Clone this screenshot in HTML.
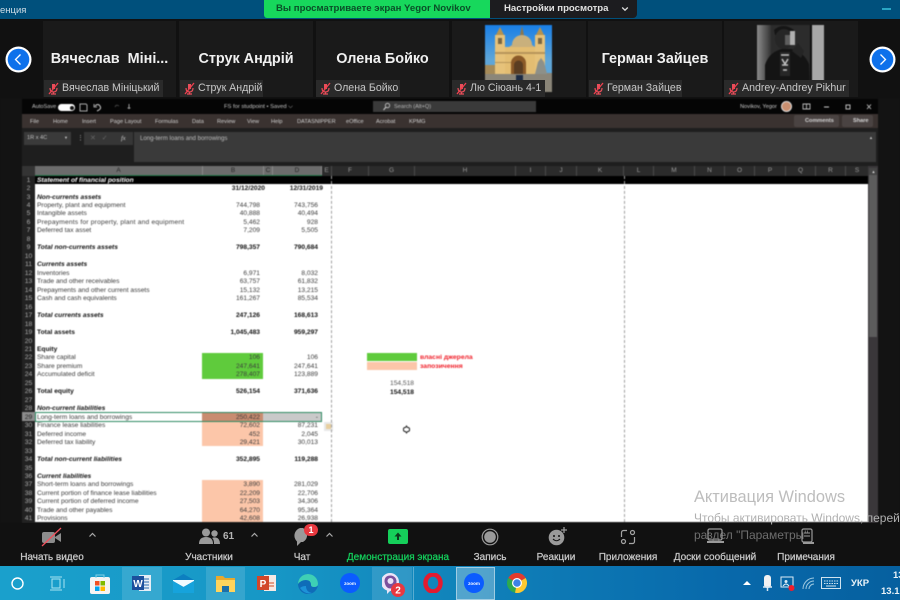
<!DOCTYPE html>
<html lang="ru"><head><meta charset="utf-8"><title>Zoom screen share</title>
<style>
*{box-sizing:border-box;margin:0;padding:0}
html,body{width:900px;height:600px;overflow:hidden;background:#111;font-family:"Liberation Sans",sans-serif}
.p{position:absolute;white-space:nowrap}
.blur{filter:blur(.42px)}
.tile{position:absolute;top:21px;height:76px;background:#1a1a1a}
.nm{position:absolute;left:0;right:0;top:29px;text-align:center;color:#f0f0f0;font-weight:bold;font-size:14.4px;line-height:18px;white-space:nowrap}
.lb{position:absolute;top:59px;height:17px;background:#2a2a2a;color:#c8c8c8;font-size:10.6px;line-height:17px;padding-left:18px;white-space:nowrap}
.lb svg{position:absolute;left:3px;top:2px}
.tab{position:absolute;top:118px;color:#cfcfcf;font-size:5.6px;line-height:8px;white-space:nowrap}
.ch{position:absolute;top:166px;height:10px;color:#9a9a9a;font-size:6.5px;line-height:10px;text-align:center;border-right:1px solid #4a4a4a}
.ch.s{background:#6c6c6c;color:#262626;border-right:1px solid #8a8a8a}
#sheet{position:absolute;left:22px;top:176.6px;width:846px}
.r{position:relative;height:8.47px;font-size:6.65px;line-height:8.47px;color:#3c3c3c;white-space:nowrap}
.r i{position:absolute;left:0;width:13px;text-align:center;font-style:normal;color:#ababab;font-size:6.8px}
.r a{position:absolute;left:15px}
.r b{position:absolute;right:608px;font-weight:normal}
.r u{position:absolute;right:550px;text-decoration:none}
.r.t{color:#111;font-weight:bold}
.r.t i{font-weight:normal}
.r.e a{font-style:italic}
.r.t b,.r.t u{font-weight:bold}
.tl{position:absolute;top:550.5px;color:#c8c8c8;font-size:10px;-webkit-text-stroke:.25px currentColor;line-height:13px;text-align:center;white-space:nowrap;transform:translateX(-50%)}
.ar{position:absolute;top:532px}
.sel{position:absolute;top:567px;height:33px;background:rgba(255,255,255,.13)}
.wm{position:absolute;white-space:nowrap}
</style></head>
<body>

<!-- top bar -->
<div class="p" style="left:0;top:0;width:900px;height:19px;background:#00507c"></div>
<div class="p" style="left:0;top:3px;color:#cfdde6;font-size:9.5px;line-height:15px">енция</div>
<div class="p" style="left:264px;top:0;width:226px;height:18px;background:#17d85c;border-radius:0 0 0 3px;font-size:9.6px;font-weight:bold;line-height:18px;padding-left:12px;color:#0a4f28">Вы просматриваете экран Yegor Novikov</div>
<div class="p" style="left:490px;top:0;width:147px;height:18px;background:#1c1c1f;border-radius:0 0 4px 0;color:#e2e2e2;font-size:9.6px;font-weight:bold;line-height:18px;padding-left:14px">Настройки просмотра</div>
<svg class="p" style="left:621px;top:6px" width="8" height="6" viewBox="0 0 8 6"><path d="M1.2 1.5 4 4.2 6.8 1.500" fill="none" stroke="#ddd" stroke-width="1.3"/></svg>
<div class="p" style="left:882px;top:8px;width:9px;height:2px;background:#2aa6c4"></div>

<!-- thumbnails -->
<div class="p" style="left:0;top:19px;width:900px;height:79px;background:#111"></div>
<div class="tile" style="left:43px;width:133px"><div class="nm">Вячеслав&nbsp; Міні...</div><div class="lb" style="left:1px;width:119px"><svg width="13" height="13" viewBox="0 0 13 13"><use href="#mic"/></svg>Вячеслав Мініцький</div></div>
<div class="tile" style="left:179px;width:134px"><div class="nm">Струк Андрій</div><div class="lb" style="left:1px;width:83px"><svg width="13" height="13" viewBox="0 0 13 13"><use href="#mic"/></svg>Струк Андрій</div></div>
<div class="tile" style="left:316px;width:133px"><div class="nm">Олена Бойко</div><div class="lb" style="left:0;width:84px"><svg width="13" height="13" viewBox="0 0 13 13"><use href="#mic"/></svg>Олена Бойко</div></div>
<div class="tile" style="left:452px;width:134px">
<svg style="position:absolute;left:33px;top:4px;filter:blur(.4px)" width="67" height="67" viewBox="0 0 67 67"><defs><linearGradient id="sky" x1="0" y1="0" x2="0" y2="1"><stop offset="0" stop-color="#1a7fe6"/><stop offset=".7" stop-color="#5fa6d8"/></linearGradient></defs><rect width="67" height="50" fill="url(#sky)"/><rect y="48" width="67" height="19" fill="#8b8679"/><path d="M0 40h10v9H0z" fill="#a58a58"/><path d="M20 22h30v27H20z" fill="#e3bd72"/><path d="M10 10h10v39H10zM50 10h10v39H50z" fill="#e6c27a"/><path d="M11 10l4-8 4 8zM51 10l4-8 4 8z" fill="#b5924f"/><path d="M13 13h4v6h-4zM53 13h4v6h-4z" fill="#7a6642"/><path d="M24 22l3-2a10 10 0 0 1 20 0l3 2z" fill="#c9b07c"/><path d="M35 10l2-9 2 9z" fill="#8a7750"/><path d="M10 27h50v2H10zM10 37h22v1H10z" fill="#b7955a"/><path d="M26 49V38a7.500 7.500 0 0 1 15 0v11z" fill="#8b5a28"/><path d="M29 49V40a4.500 4.500 0 0 1 9 0v9z" fill="#5a3d22"/><path d="M50 49l3-12 3-4 3 4 3 12z" fill="#8d9089"/><rect x="31" y="50" width="7" height="17" fill="#1c2b44"/></svg>
<div class="lb" style="left:0;width:93px"><svg width="13" height="13" viewBox="0 0 13 13"><use href="#mic"/></svg>Лю Сіюань 4-1</div></div>
<div class="tile" style="left:588px;width:134px"><div class="nm">Герман Зайцев</div><div class="lb" style="left:1px;width:93px"><svg width="13" height="13" viewBox="0 0 13 13"><use href="#mic"/></svg>Герман Зайцев</div></div>
<div class="tile" style="left:724px;width:134px">
<svg style="position:absolute;left:33px;top:4px;filter:blur(.5px)" width="67" height="67" viewBox="0 0 67 67"><defs><linearGradient id="lp" x1="0" y1="0" x2="1" y2="0"><stop offset="0" stop-color="#8c8c8c"/><stop offset="1" stop-color="#333"/></linearGradient></defs><rect width="67" height="67" fill="#2c2c2c"/><rect width="14" height="67" fill="url(#lp)"/><rect x="54" width="13" height="67" fill="#a8a8a8"/><rect x="53" width="2" height="67" fill="#111"/><path d="M17 5q9-8 20 0l-2 5H18z" fill="#151515"/><ellipse cx="27" cy="14" rx="9" ry="10" fill="#262626"/><path d="M28 10h7v10h-7z" fill="#5e5e5e"/><path d="M33 6h5v14h-5z" fill="#b0b0b0"/><path d="M8 67V40q4-13 17-16h9q13 3 18 15l1 28z" fill="#141414"/><path d="M23 27h10v24H23z" fill="#272727"/><path d="M24 30h8M25 34l3 5 3-5M25 40h6M26 45h4" stroke="#c2c2c2" stroke-width="1.500" fill="none"/><path d="M35 26l9 7 3-7-6-8z" fill="#252525"/></svg>
<div class="lb" style="left:0;width:125px"><svg width="13" height="13" viewBox="0 0 13 13"><use href="#mic"/></svg>Andrey-Andrey Pikhur</div></div>
<svg class="p" style="left:0;top:0;width:0;height:0"><defs><g id="mic"><path d="M5 2h3v5H5z" fill="#e94e5a"/><path d="M3 6q0 4 3.500 4T10 6M6.500 10v2M4 12h5" fill="none" stroke="#e94e5a" stroke-width="1.200"/><path d="M2 12 11 1" stroke="#f0404f" stroke-width="1.300"/></g></defs></svg>
<svg class="p" style="left:5px;top:46px" width="27" height="27" viewBox="0 0 27 27"><circle cx="13.500" cy="13.500" r="13" fill="#fff"/><circle cx="13.500" cy="13.500" r="10.800" fill="#0e71eb"/><path d="M15.500 8.500l-5 5 5 5" fill="none" stroke="#fff" stroke-width="1.300"/></svg>
<svg class="p" style="left:869px;top:46px" width="27" height="27" viewBox="0 0 27 27"><circle cx="13.500" cy="13.500" r="13" fill="#fff"/><circle cx="13.500" cy="13.500" r="10.800" fill="#0e71eb"/><path d="M11.500 8.500l5 5-5 5" fill="none" stroke="#fff" stroke-width="1.300"/></svg>

<!-- excel window -->
<div class="blur">
<div class="p" style="left:22px;top:99px;width:858px;height:424px;background:#1e1e1e"></div>
<div class="p" style="left:22px;top:99px;width:858px;height:15px;background:#050505"></div>
<div class="p" style="left:32px;top:103px;color:#c6c6c6;font-size:5.6px;line-height:8px">AutoSave</div>
<div class="p" style="left:58px;top:104px;width:17px;height:7px;border-radius:4px;background:#fff"></div>
<div class="p" style="left:70px;top:105.500px;width:4px;height:4px;border-radius:2px;background:#111"></div>
<svg class="p" style="left:79px;top:103px" width="56" height="9" viewBox="0 0 56 9"><path d="M1 1h6l1 1v6H1z" fill="none" stroke="#aaa"/><path d="M16 3q3-3 5 0t-3 5" fill="none" stroke="#ccc"/><path d="M15 1v3h3" fill="none" stroke="#ccc" stroke-width=".8"/><path d="M40 3q-3-2-4 1" fill="none" stroke="#444"/><path d="M50 1v5M48.500 5h3" stroke="#999"/></svg>
<div class="p" style="left:224px;top:103px;color:#c4c4c4;font-size:5.800px;line-height:8px">FS for studpoint • Saved ⌵</div>
<div class="p" style="left:373px;top:101px;width:163px;height:11px;background:#3a3a3a"></div>
<svg class="p" style="left:382px;top:102px" width="9" height="9" viewBox="0 0 9 9"><circle cx="5.500" cy="3.500" r="2.200" fill="none" stroke="#ccc" stroke-width=".8"/><path d="M4 5 1.500 8" stroke="#ccc"/></svg>
<div class="p" style="left:394px;top:103px;color:#b8b8b8;font-size:5.600px;line-height:8px">Search (Alt+Q)</div>
<div class="p" style="left:740px;top:103px;color:#c8c8c8;font-size:5.600px;line-height:8px">Novikov, Yegor</div>
<div class="p" style="left:781px;top:101px;width:11px;height:11px;border-radius:50%;background:#c98f70;border:1px solid #ddd"></div>
<svg class="p" style="left:800px;top:102px" width="74" height="10" viewBox="0 0 74 10"><path d="M3 2h7v5H3zM6.500 2v5" fill="none" stroke="#bbb" stroke-width=".9"/><path d="M24 5h5" stroke="#ccc"/><path d="M46 3h4v4h-4z" fill="none" stroke="#bbb"/><path d="M67 2.500l4 4.500M71 2.500l-4 4.500" stroke="#ccc" stroke-width=".8"/></svg>

<div class="p" style="left:22px;top:114px;width:858px;height:14px;background:#3a3230"></div>
<div class="tab" style="left:30px">File</div><div class="tab" style="left:53px">Home</div><div class="tab" style="left:82px">Insert</div><div class="tab" style="left:110px">Page Layout</div><div class="tab" style="left:155px">Formulas</div><div class="tab" style="left:192px">Data</div><div class="tab" style="left:217px">Review</div><div class="tab" style="left:247px">View</div><div class="tab" style="left:271px">Help</div><div class="tab" style="left:297px">DATASNIPPER</div><div class="tab" style="left:346px">eOffice</div><div class="tab" style="left:376px">Acrobat</div><div class="tab" style="left:409px">KPMG</div>
<div class="p" style="left:794px;top:115px;width:45px;height:12px;background:#4a4342;border-radius:2px;color:#d4d4d4;font-size:5.600px;line-height:12px;padding-left:11px;font-weight:bold">Comments</div>
<div class="p" style="left:842px;top:115px;width:31px;height:12px;background:#4a4342;border-radius:2px;color:#d4d4d4;font-size:5.600px;line-height:12px;padding-left:11px;font-weight:bold">Share</div>

<div class="p" style="left:24px;top:132px;width:47px;height:13px;background:#3a3a3a;color:#c2c2c2;font-size:5.600px;line-height:13px;padding-left:3px">1R x 4C</div>
<div class="p" style="left:64px;top:135px;color:#ccc;font-size:4px;line-height:6px">▼</div>
<div class="p" style="left:77px;top:134px;color:#aaa;font-size:7px;line-height:9px">⋮</div>
<div class="p" style="left:84px;top:132px;width:49px;height:13px;background:#363636"></div>
<div class="p" style="left:90px;top:134px;color:#666;font-size:7px;line-height:9px">✕&nbsp;&nbsp;&nbsp;✓</div>
<div class="p" style="left:121px;top:134px;color:#ccc;font-size:6.500px;line-height:9px;font-style:italic;font-family:'Liberation Serif',serif">fx</div>
<div class="p" style="left:134px;top:131.500px;width:742px;height:30.500px;background:#3a3a3a"></div>
<div class="p" style="left:140px;top:134px;color:#bdbdbd;font-size:6.100px;line-height:9px">Long-term loans and borrowings</div>
<div class="p" style="left:869px;top:135px;color:#ccc;font-size:4px;line-height:5px">▲</div>

<!-- column headers -->
<div class="p" style="left:22px;top:166px;width:846px;height:10px;background:#2b2b2b"></div>
<div class="p" style="left:22px;top:166px;width:13px;height:10px;background:#343434"></div>
<div class="ch s" style="left:35px;width:168px">A</div>
<div class="ch s" style="left:203px;width:61px">B</div>
<div class="ch s" style="left:264px;width:9px">C</div>
<div class="ch s" style="left:273px;width:49px">D</div>
<div class="ch" style="left:322px;width:10px">E</div>
<div class="ch" style="left:332px;width:37px">F</div>
<div class="ch" style="left:369px;width:46px">G</div>
<div class="ch" style="left:415px;width:101px">H</div>
<div class="ch" style="left:516px;width:30px">I</div>
<div class="ch" style="left:546px;width:31px">J</div>
<div class="ch" style="left:577px;width:47px">K</div>
<div class="ch" style="left:624px;width:30px">L</div>
<div class="ch" style="left:654px;width:41px">M</div>
<div class="ch" style="left:695px;width:30px">N</div>
<div class="ch" style="left:725px;width:30px">O</div>
<div class="ch" style="left:755px;width:31px">P</div>
<div class="ch" style="left:786px;width:30px">Q</div>
<div class="ch" style="left:816px;width:30px">R</div>
<div class="ch" style="left:846px;width:22px;border:0">S</div>
<div class="p" style="left:35px;top:175px;width:287px;height:1px;background:#217346"></div>

<!-- sheet bg -->
<div class="p" style="left:22px;top:176px;width:13px;height:347px;background:#222"></div>
<div class="p" style="left:35px;top:176px;width:833px;height:8px;background:#000"></div>
<div class="p" style="left:35px;top:184px;width:833px;height:338px;background:#fff"></div>
<div class="p" style="left:202px;top:352.500px;width:61px;height:26.200px;background:#5fcb3c"></div>
<div class="p" style="left:202px;top:412.400px;width:61px;height:8.500px;background:#c98c70"></div>
<div class="p" style="left:263px;top:412.400px;width:59px;height:8.500px;background:#c9c9c9"></div>
<div class="p" style="left:202px;top:420.900px;width:61px;height:25.400px;background:#fcc6a9"></div>
<div class="p" style="left:202px;top:480.100px;width:61px;height:42px;background:#fcc6a9"></div>
<div class="p" style="left:367px;top:352.800px;width:50px;height:8.600px;background:#5fcb3c"></div>
<div class="p" style="left:367px;top:361.500px;width:50px;height:8.500px;background:#fcc6a9"></div>
<div class="p" style="left:22px;top:412.400px;width:13px;height:8.500px;background:#8c8c8c"></div>

<div id="sheet">
<div class="r e" style="color:#fff;font-weight:bold"><i style="font-weight:normal">1</i><a>Statement of financial position</a></div>
<div class="r t"><i>2</i><b style="right:603px">31/12/2020</b><u style="right:545px">12/31/2019</u></div>
<div class="r t e"><i>3</i><a>Non-currents assets</a></div>
<div class="r"><i>4</i><a>Property, plant and equipment</a><b>744,798</b><u>743,756</u></div>
<div class="r"><i>5</i><a>Intangible assets</a><b>40,888</b><u>40,494</u></div>
<div class="r"><i>6</i><a style="letter-spacing:.2px">Prepayments for property, plant and equipment</a><b>5,462</b><u>928</u></div>
<div class="r"><i>7</i><a>Deferred tax asset</a><b>7,209</b><u>5,505</u></div>
<div class="r"><i>8</i></div>
<div class="r t e"><i>9</i><a>Total non-currents assets</a><b>798,357</b><u>790,684</u></div>
<div class="r"><i>10</i></div>
<div class="r t e"><i>11</i><a>Currents assets</a></div>
<div class="r"><i>12</i><a>Inventories</a><b>6,971</b><u>8,032</u></div>
<div class="r"><i>13</i><a>Trade and other receivables</a><b>63,757</b><u>61,832</u></div>
<div class="r"><i>14</i><a>Prepayments and other current assets</a><b>15,132</b><u>13,215</u></div>
<div class="r"><i>15</i><a>Cash and cash equivalents</a><b>161,267</b><u>85,534</u></div>
<div class="r"><i>16</i></div>
<div class="r t e"><i>17</i><a>Total currents assets</a><b>247,126</b><u>168,613</u></div>
<div class="r"><i>18</i></div>
<div class="r t"><i>19</i><a>Total assets</a><b>1,045,483</b><u>959,297</u></div>
<div class="r"><i>20</i></div>
<div class="r t"><i>21</i><a>Equity</a></div>
<div class="r"><i>22</i><a>Share capital</a><b>106</b><u>106</u></div>
<div class="r"><i>23</i><a>Share premium</a><b>247,641</b><u>247,641</u></div>
<div class="r"><i>24</i><a>Accumulated deficit</a><b>278,407</b><u>123,889</u></div>
<div class="r"><i>25</i></div>
<div class="r t"><i>26</i><a>Total equity</a><b>526,154</b><u>371,636</u></div>
<div class="r"><i>27</i></div>
<div class="r t e"><i>28</i><a>Non-current liabilities</a></div>
<div class="r"><i style="color:#222">29</i><a>Long-term loans and borrowings</a><b>250,422</b><u>-</u></div>
<div class="r"><i>30</i><a>Finance lease liabilities</a><b>72,602</b><u>87,231</u></div>
<div class="r"><i>31</i><a>Deferred income</a><b>452</b><u>2,045</u></div>
<div class="r"><i>32</i><a>Deferred tax liability</a><b>29,421</b><u>30,013</u></div>
<div class="r"><i>33</i></div>
<div class="r t e"><i>34</i><a>Total non-current liabilities</a><b>352,895</b><u>119,288</u></div>
<div class="r"><i>35</i></div>
<div class="r t e"><i>36</i><a>Current liabilities</a></div>
<div class="r"><i>37</i><a>Short-term loans and borrowings</a><b>3,890</b><u>281,029</u></div>
<div class="r"><i>38</i><a>Current portion of finance lease liabilities</a><b>22,209</b><u>22,706</u></div>
<div class="r"><i>39</i><a>Current portion of deferred income</a><b>27,503</b><u>34,306</u></div>
<div class="r"><i>40</i><a>Trade and other payables</a><b>64,270</b><u>95,364</u></div>
<div class="r"><i>41</i><a>Provisions</a><b>42,608</b><u>26,938</u></div>
</div>

<div class="p" style="left:35px;top:411.500px;width:287px;height:10px;border:1.200px solid #2e8a63"></div>
<div class="p" style="left:324px;top:422px;width:9px;height:9px;background:#e8e8e8"></div>
<div class="p" style="left:326px;top:424px;width:5px;height:5px;background:#e8cf9f"></div>
<div class="p" style="left:331px;top:176px;height:346px;border-left:1px dashed #a0a0a0"></div>
<div class="p" style="left:624px;top:176px;height:346px;border-left:1px dashed #a0a0a0"></div>
<div class="p" style="left:420px;top:354px;color:#f0202a;font-size:6.800px;font-weight:bold;line-height:8.500px">власні джерела</div>
<div class="p" style="left:420px;top:362.500px;color:#f0202a;font-size:6.800px;font-weight:bold;line-height:8.500px">запозичення</div>
<div class="p" style="left:390px;top:380px;color:#555;font-size:6.650px;line-height:8.500px">154,518</div>
<div class="p" style="left:390px;top:388.500px;color:#111;font-size:6.650px;font-weight:bold;line-height:8.500px">154,518</div>
<svg class="p" style="left:402px;top:425px" width="9" height="9" viewBox="0 0 9 9"><path d="M4.500 1l1 1.500h1l1 1v2l-1 1h-1l-1 1.500-1-1.500h-1l-1-1v-2l1-1h1z" fill="#fff" stroke="#222"/></svg>

<div class="p" style="left:868px;top:166px;width:10px;height:357px;background:#3a373a"></div>
<div class="p" style="left:869px;top:175px;width:8px;height:162px;background:#5c5c5c"></div>
<div class="p" style="left:869px;top:168px;width:8px;height:7px;background:#454545"></div>
<div class="p" style="left:871.500px;top:170px;color:#ddd;font-size:4px;line-height:4px">▲</div>
<div class="p" style="left:878px;top:98px;width:22px;height:425px;background:#131313"></div>
<div class="p" style="left:0;top:98px;width:22px;height:425px;background:#131313"></div>
</div>

<!-- watermark -->
<div class="wm" style="left:694px;top:487px;font-size:16.400px;line-height:20px;color:#bdbdbd">Активация Windows</div>

<!-- zoom toolbar -->
<div class="p" style="left:0;top:522.500px;width:900px;height:43.500px;background:#111"></div>
<div class="wm" style="left:694px;top:511px;font-size:12px;line-height:14px;color:#b0b0b0">Чтобы активировать Windows, перей</div>
<div class="wm" style="left:694px;top:527.500px;font-size:12px;line-height:14px;color:#6e6e6e">раздел "Параметры"</div>

<svg class="p" style="left:41px;top:527px" width="22" height="20" viewBox="0 0 22 20"><rect x="1" y="5" width="13" height="11" rx="2" fill="#8c8c8c"/><path d="M14 10l6-4v9l-6-4z" fill="#8c8c8c"/><path d="M1 19 20 1" stroke="#f0505c" stroke-width="1.300"/></svg>
<div class="tl" style="left:52px">Начать видео</div>
<svg class="ar" style="left:88px" width="9" height="6" viewBox="0 0 9 6"><path d="M1.500 4.500 4.500 1.500 7.500 4.500" fill="none" stroke="#aaa" stroke-width="1.200"/></svg>

<svg class="p" style="left:199px;top:528px" width="21" height="17" viewBox="0 0 21 17"><circle cx="7" cy="4.500" r="4" fill="#9a9a9a"/><circle cx="15.500" cy="5.500" r="3.200" fill="#9a9a9a"/><path d="M0 16q0-7 7-7t7 7zM15 16q0-5-2-6 2-1 4-.5 4 1 4 6.500z" fill="#9a9a9a"/></svg>
<div class="p" style="left:223px;top:530px;color:#b5b5b5;font-size:10px;font-weight:bold;line-height:13px">61</div>
<div class="tl" style="left:209px">Участники</div>
<svg class="ar" style="left:250px" width="9" height="6" viewBox="0 0 9 6"><path d="M1.500 4.500 4.500 1.500 7.500 4.500" fill="none" stroke="#aaa" stroke-width="1.200"/></svg>

<svg class="p" style="left:292px;top:528px" width="19" height="18" viewBox="0 0 19 18"><path d="M8 0h3a8 8 0 0 1 0 14H9l-4 4v-4.500A8 8 0 0 1 8 0z" fill="#9a9a9a"/></svg>
<div class="p" style="left:304px;top:524px;width:14px;height:12px;border-radius:6px;background:#e8383f;color:#fff;font-size:9px;font-weight:bold;line-height:12px;text-align:center">1</div>
<div class="tl" style="left:302px">Чат</div>
<svg class="ar" style="left:325px" width="9" height="6" viewBox="0 0 9 6"><path d="M1.500 4.500 4.500 1.500 7.500 4.500" fill="none" stroke="#aaa" stroke-width="1.200"/></svg>

<svg class="p" style="left:388px;top:529px" width="20" height="16" viewBox="0 0 20 16"><rect width="20" height="15" rx="2" fill="#15cf5a"/><path d="M10 3.500 6.500 7.500H9V11h2V7.500h2.500z" fill="#0b3a1c"/></svg>
<div class="tl" style="left:398px;color:#14cf5c">Демонстрация экрана</div>

<svg class="p" style="left:481px;top:528px" width="18" height="18" viewBox="0 0 18 18"><circle cx="9" cy="9" r="7.800" fill="none" stroke="#9a9a9a" stroke-width="1.200"/><circle cx="9" cy="9" r="5.800" fill="#9a9a9a"/></svg>
<div class="tl" style="left:490px">Запись</div>

<svg class="p" style="left:548px;top:526px" width="20" height="20" viewBox="0 0 20 20"><circle cx="8.500" cy="11.500" r="7.800" fill="#9a9a9a"/><circle cx="6" cy="10" r="1" fill="#111"/><circle cx="11" cy="10" r="1" fill="#111"/><path d="M5 13q3.500 3.500 7 0" fill="none" stroke="#111"/><path d="M16 1v6M13 4h6" stroke="#9a9a9a" stroke-width="1.300"/></svg>
<div class="tl" style="left:556px">Реакции</div>

<svg class="p" style="left:620px;top:529px" width="16" height="16" viewBox="0 0 16 16"><path d="M7 1.500H3.500a2 2 0 0 0-2 2V8M9 14.500h3.500a2 2 0 0 0 2-2V8" fill="none" stroke="#a5a5a5" stroke-width="1.200"/><circle cx="12.500" cy="3.500" r="2" fill="none" stroke="#a5a5a5" stroke-width="1.200"/><circle cx="3.500" cy="12.500" r="2" fill="none" stroke="#a5a5a5" stroke-width="1.200"/></svg>
<div class="tl" style="left:628px">Приложения</div>

<svg class="p" style="left:706px;top:528px" width="19" height="17" viewBox="0 0 19 17"><rect x="2" y="1" width="14" height="11" rx="1.500" fill="none" stroke="#9a9a9a" stroke-width="1.200"/><path d="M1 14h17" stroke="#9a9a9a" stroke-width="2"/></svg>
<div class="tl" style="left:715px">Доски сообщений</div>

<svg class="p" style="left:800px;top:528px" width="15" height="17" viewBox="0 0 15 17"><rect x="2" y="1" width="10" height="13" rx="1.500" fill="none" stroke="#9a9a9a" stroke-width="1.200"/><path d="M4 5h6M4 8h6" stroke="#9a9a9a"/><path d="M3 15h11" stroke="#9a9a9a" stroke-width="2"/></svg>
<div class="tl" style="left:806px">Примечания</div>

<!-- taskbar -->
<div class="p" style="left:0;top:566px;width:900px;height:34px;background:linear-gradient(90deg,#1aa0cc 0%,#1797c6 30%,#0f7fb8 55%,#0869ab 80%,#06609f 100%)"></div>
<div class="sel" style="left:122px;width:40px"></div>
<div class="sel" style="left:206px;width:39px"></div>
<div class="sel" style="left:372px;width:40px"></div>
<div class="sel" style="left:456px;width:39px;background:rgba(255,255,255,.28);border:1px solid rgba(255,255,255,.45)"></div>
<div class="p" style="left:412.500px;top:567px;width:1px;height:33px;background:rgba(255,255,255,.3)"></div>

<svg class="p" style="left:10px;top:576px" width="15" height="15" viewBox="0 0 15 15"><circle cx="7.500" cy="7.500" r="5.500" fill="none" stroke="#fff" stroke-width="1.400"/></svg>
<svg class="p" style="left:49px;top:576px" width="16" height="15" viewBox="0 0 16 15"><path d="M3 3h8v9H3zM1 1h12M1 14h12M15 3v9" fill="none" stroke="#a8e4f2" stroke-width="1"/></svg>
<svg class="p" style="left:90px;top:574px" width="20" height="20" viewBox="0 0 20 20"><rect y="3" width="20" height="17" rx="2" fill="#f4f4f4"/><path d="M6 4V1h8v3" fill="none" stroke="#7fd0e6"/><rect x="5" y="7" width="4.500" height="4.500" fill="#f25022"/><rect x="10.500" y="7" width="4.500" height="4.500" fill="#7fba00"/><rect x="5" y="12.500" width="4.500" height="4.500" fill="#00a4ef"/><rect x="10.500" y="12.500" width="4.500" height="4.500" fill="#ffb900"/></svg>
<svg class="p" style="left:132px;top:574px" width="19" height="18" viewBox="0 0 19 18"><rect x="7" y="1" width="12" height="16" fill="#e6eef6"/><path d="M11 5h6M11 8h6M11 11h6M11 14h6" stroke="#2b6cb0"/><rect y="2" width="12" height="14" fill="#1c4f9c"/><text x="6" y="13" font-family="Liberation Sans" font-size="10" font-weight="bold" fill="#fff" text-anchor="middle">W</text></svg>
<svg class="p" style="left:173px;top:574px" width="21" height="19" viewBox="0 0 21 19"><path d="M0 6 10.500 0 21 6v13H0z" fill="#0c7fc0"/><path d="M0 6h21v1L10.500 13 0 7z" fill="#f2fbff"/><path d="M0 7l10.500 6L21 7v12H0z" fill="#16a3dc"/></svg>
<svg class="p" style="left:216px;top:575px" width="19" height="17" viewBox="0 0 19 17"><path d="M0 1h7l2 2h10v3H0z" fill="#e8a92d"/><path d="M0 5h19v12H0z" fill="#ffd45c"/><rect x="6" y="11" width="7" height="6" fill="#1d6fa8"/></svg>
<svg class="p" style="left:257px;top:574px" width="19" height="18" viewBox="0 0 19 18"><rect x="7" y="1" width="12" height="16" fill="#f6e9e4"/><path d="M12 9h5M12 12h5" stroke="#d04d25"/><rect y="2" width="12" height="14" fill="#d2472a"/><text x="6" y="13" font-family="Liberation Sans" font-size="10" font-weight="bold" fill="#fff" text-anchor="middle">P</text></svg>
<svg class="p" style="left:298px;top:574px" width="20" height="20" viewBox="0 0 20 20"><circle cx="10" cy="10" r="10" fill="#0f6cb8"/><path d="M0 10a10 10 0 0 1 20 0q0 3-4 3-3 0-3-2 0-5-5-5-5 0-8 4z" fill="#3ed0b5"/><path d="M2 14q5 7 12 5-6-1-6-7-4 0-6 2z" fill="#1d92d8"/></svg>
<svg class="p" style="left:340px;top:573px" width="20" height="20" viewBox="0 0 20 20"><circle cx="10" cy="10" r="10" fill="#0b5cff"/><text x="10" y="12" font-family="Liberation Sans" font-size="4.500" font-weight="bold" fill="#fff" text-anchor="middle">zoom</text></svg>
<svg class="p" style="left:382px;top:573px" width="24" height="24" viewBox="0 0 24 24"><path d="M8 0a9 9 0 0 1 9 9q0 8-9 9l-3 3v-3.500A9 9 0 0 1 8 0z" fill="#ece4f7"/><path d="M8.500 2.500a6 6 0 0 1 6 6q0 6-6 7-5 0-6-7 0-6 6-6z" fill="#7b519d"/><circle cx="8.500" cy="8" r="3" fill="#ece4f7"/><circle cx="16" cy="17" r="7" fill="#e8383f"/><text x="16" y="20.500" font-family="Liberation Sans" font-size="10" font-weight="bold" fill="#fff" text-anchor="middle">2</text></svg>
<svg class="p" style="left:423px;top:573px" width="20" height="20" viewBox="0 0 20 20"><ellipse cx="10" cy="10" rx="7.500" ry="8.500" fill="none" stroke="#e31b2f" stroke-width="4.500"/></svg>
<svg class="p" style="left:464px;top:573px" width="20" height="20" viewBox="0 0 20 20"><circle cx="10" cy="10" r="10" fill="#0b5cff"/><text x="10" y="12" font-family="Liberation Sans" font-size="4.500" font-weight="bold" fill="#fff" text-anchor="middle">zoom</text></svg>
<svg class="p" style="left:507px;top:573px" width="20" height="20" viewBox="0 0 20 20"><path d="M10 10 1.300 5A10 10 0 0 1 18.700 5z" fill="#e33b2e"/><path d="M10 10 1.300 5A10 10 0 0 0 8 19.800z" fill="#2da94f"/><path d="M10 10 18.700 5A10 10 0 0 1 8 19.800z" fill="#fdc92f"/><circle cx="10" cy="10" r="5" fill="#fff"/><circle cx="10" cy="10" r="3.800" fill="#3b82e8"/></svg>

<svg class="p" style="left:743px;top:580px" width="8" height="6" viewBox="0 0 8 6"><path d="M0 5 4 1l4 4z" fill="#fff"/></svg>
<svg class="p" style="left:762px;top:575px" width="11" height="17" viewBox="0 0 11 17"><rect x="2" y="0" width="7" height="13" rx="3" fill="#f2f2f2"/><path d="M1 12h9M5.500 13v3" stroke="#d5e6f2" stroke-width="1.500"/></svg>
<svg class="p" style="left:780px;top:576px" width="16" height="16" viewBox="0 0 16 16"><rect x="1" y="1" width="12" height="10" fill="none" stroke="#dcecf5"/><circle cx="6" cy="5.500" r="1.500" fill="#dcecf5"/><path d="M3 10q3-4 6 0" fill="none" stroke="#dcecf5"/><circle cx="11.500" cy="12" r="3" fill="#f01d2c"/></svg>
<svg class="p" style="left:801px;top:576px" width="14" height="14" viewBox="0 0 14 14"><path d="M2 13a11 11 0 0 1 11-11M5 13a8 8 0 0 1 8-8M8 13a5 5 0 0 1 5-5" fill="none" stroke="#9cc8e0" stroke-width="1"/></svg>
<svg class="p" style="left:821px;top:577px" width="20" height="13" viewBox="0 0 20 13"><rect x=".5" y=".5" width="19" height="11" fill="none" stroke="#cfe3ef"/><path d="M3 4h14M3 6.500h14" stroke="#cfe3ef" stroke-dasharray="1.500 1"/><path d="M5 9h10" stroke="#cfe3ef"/></svg>
<div class="p" style="left:851px;top:577px;color:#eaf3f8;font-size:9.500px;font-weight:bold;line-height:13px">УКР</div>
<div class="p" style="left:893px;top:569px;color:#eaf3f8;font-size:9.500px;font-weight:bold;line-height:13px">13</div>
<div class="p" style="left:881px;top:585px;color:#eaf3f8;font-size:9.500px;font-weight:bold;line-height:13px">13.1</div>

</body></html>
